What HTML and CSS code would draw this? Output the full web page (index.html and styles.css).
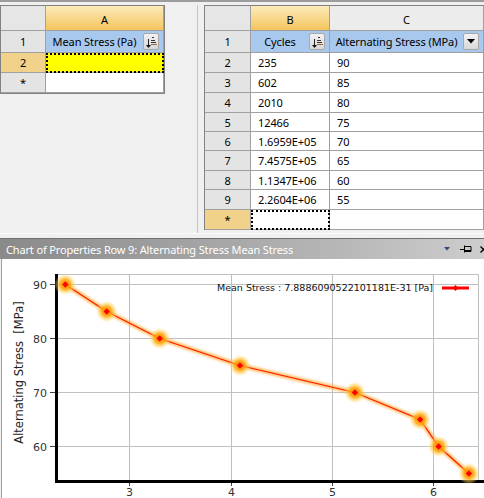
FILE: index.html
```html
<!DOCTYPE html>
<html>
<head>
<meta charset="utf-8">
<title>Chart of Properties</title>
<link rel="stylesheet" href="styles.css">
</head>
<body>
<div class="top">
  <div class="pane-left">
    <div class="grid grid-a">
      <div class="c corner"></div>
      <div class="c ch sel">A</div>
      <div class="c rh">1</div>
      <div class="c hdr"><span class="lbl">Mean Stress (Pa)</span><span class="btn"><svg width="12" height="14" viewBox="0 0 12 14"><path d="M7 2.5h2M6 5.5h4M6 7.5h5M6 9.5h6" stroke="#333" stroke-width="1" fill="none"/><path d="M6 9.5h6" stroke="#9a6a30" stroke-width="1"/><path d="M3.5 4v6" stroke="#222" stroke-width="1"/><path d="M1 10h5l-2.5 3z" fill="#111"/></svg></span></div>
      <div class="c rh sel">2</div>
      <div class="c cur yellow"></div>
      <div class="c rh">*</div>
      <div class="c"></div>
    </div>
  </div>
  <div class="pane-right">
    <div class="grid grid-bc">
      <div class="c corner"></div>
      <div class="c ch sel">B</div>
      <div class="c ch">C</div>

      <div class="c rh">1</div>
      <div class="c hdr"><span class="lbl">Cycles</span><span class="btn"><svg width="12" height="14" viewBox="0 0 12 14"><path d="M7 2.5h2M6 5.5h4M6 7.5h5M6 9.5h6" stroke="#333" stroke-width="1" fill="none"/><path d="M6 9.5h6" stroke="#9a6a30" stroke-width="1"/><path d="M3.5 4v6" stroke="#222" stroke-width="1"/><path d="M1 10h5l-2.5 3z" fill="#111"/></svg></span></div>
      <div class="c hdr"><span class="lbl">Alternating Stress (MPa)</span><span class="btn"><svg width="8" height="5" viewBox="0 0 8 5"><path d="M0 0h8l-4 4.5z" fill="#000"/></svg></span></div>

      <div class="c rh">2</div><div class="c">235</div><div class="c">90</div>
      <div class="c rh">3</div><div class="c">602</div><div class="c">85</div>
      <div class="c rh">4</div><div class="c">2010</div><div class="c">80</div>
      <div class="c rh">5</div><div class="c">12466</div><div class="c">75</div>
      <div class="c rh">6</div><div class="c">1.6959E+05</div><div class="c">70</div>
      <div class="c rh">7</div><div class="c">7.4575E+05</div><div class="c">65</div>
      <div class="c rh">8</div><div class="c">1.1347E+06</div><div class="c">60</div>
      <div class="c rh">9</div><div class="c">2.2604E+06</div><div class="c">55</div>
      <div class="c rh sel">*</div><div class="c cur"></div><div class="c"></div>
    </div>
  </div>
</div>
<div class="gap"></div>
<div class="titlebar">
  <span class="title">Chart of Properties Row 9: Alternating Stress Mean Stress</span>
  <span class="tool tri"><svg width="6" height="4" viewBox="0 0 6 4"><path d="M0 0h6l-3 3.5z" fill="#2d4a78"/></svg></span>
  <span class="tool pin"><svg width="12" height="8" viewBox="0 0 12 8"><path d="M0 4.5h4M4.5 0.5v7M4.5 1.5h6.5v5h-6.5" stroke="#000" stroke-width="1" fill="none"/><path d="M4.5 5.5h6.5" stroke="#000" stroke-width="1"/></svg></span>
  <span class="tool close"><svg width="7" height="7" viewBox="0 0 7 7"><path d="M0.5 0.5l6 6M6.5 0.5l-6 6" stroke="#000" stroke-width="1.3"/></svg></span>
</div>
<div class="chart">
  <svg class="plot" width="482" height="239" viewBox="2 259 482 239">
    <defs>
      <radialGradient id="glow">
        <stop offset="0" stop-color="#ff8a00" stop-opacity="1"/>
        <stop offset="0.45" stop-color="#ffa200" stop-opacity="0.85"/>
        <stop offset="0.75" stop-color="#ffcf55" stop-opacity="0.45"/>
        <stop offset="1" stop-color="#ffeaa0" stop-opacity="0"/>
      </radialGradient>
      <filter id="soft" x="-20%" y="-20%" width="140%" height="140%"><feGaussianBlur stdDeviation="1.2"/></filter>
    </defs>
    <g stroke="#c0c0c0" stroke-width="1" fill="none">
      <path d="M58 274.5H478.5V480"/>
      <path d="M58 284.5H478M58 338.5H478M58 392.5H478M58 446.5H478"/>
      <path d="M129.5 275V480M231.5 275V480M332.5 275V480M433.5 275V480"/>
    </g>
    <g stroke="#444" stroke-width="1">
      <path d="M50 284.5H55M50 338.5H55M50 392.5H55M50 446.5H55"/>
      <path d="M129.5 483V486M231.5 483V486M332.5 483V486M433.5 483V486"/>
    </g>
    <rect x="55" y="274" width="3" height="209" fill="#000"/>
    <rect x="55" y="480" width="429" height="3" fill="#000"/>
    <g class="tick" text-anchor="end">
      <text x="47" y="288.5">90</text>
      <text x="47" y="342.5">80</text>
      <text x="47" y="396.5">70</text>
      <text x="47" y="450.5">60</text>
    </g>
    <g class="tick" text-anchor="middle">
      <text x="129.5" y="496">3</text>
      <text x="231.5" y="496">4</text>
      <text x="332.5" y="496">5</text>
      <text x="433.5" y="496">6</text>
    </g>
    <text class="ytitle" transform="translate(23 372.5) rotate(-90)" text-anchor="middle" xml:space="preserve">Alternating Stress  [MPa]</text>
    <polyline points="65.3,284.5 106.7,311.5 159.7,338.5 240,365.5 354.9,392.5 420.1,419.5 438.6,446.5 468.9,473.5" fill="none" stroke="#ffa830" stroke-width="4.5" stroke-opacity="0.7" filter="url(#soft)"/>
    <polyline points="65.3,284.5 106.7,311.5 159.7,338.5 240,365.5 354.9,392.5 420.1,419.5 438.6,446.5 468.9,473.5" fill="none" stroke="#ff1a00" stroke-width="1.2"/>
    <g fill="url(#glow)">
      <circle cx="65.3" cy="284.5" r="11"/>
      <circle cx="106.7" cy="311.5" r="11"/>
      <circle cx="159.7" cy="338.5" r="11"/>
      <circle cx="240" cy="365.5" r="11"/>
      <circle cx="354.9" cy="392.5" r="11"/>
      <circle cx="420.1" cy="419.5" r="11"/>
      <circle cx="438.6" cy="446.5" r="11"/>
      <circle cx="468.9" cy="473.5" r="11"/>
    </g>
    <g fill="#ff0000">
      <path d="M65.3 281.3l3.2 3.2-3.2 3.2-3.2-3.2z"/>
      <path d="M106.7 308.3l3.2 3.2-3.2 3.2-3.2-3.2z"/>
      <path d="M159.7 335.3l3.2 3.2-3.2 3.2-3.2-3.2z"/>
      <path d="M240 362.3l3.2 3.2-3.2 3.2-3.2-3.2z"/>
      <path d="M354.9 389.3l3.2 3.2-3.2 3.2-3.2-3.2z"/>
      <path d="M420.1 416.3l3.2 3.2-3.2 3.2-3.2-3.2z"/>
      <path d="M438.6 443.3l3.2 3.2-3.2 3.2-3.2-3.2z"/>
      <path d="M468.9 470.3l3.2 3.2-3.2 3.2-3.2-3.2z"/>
    </g>
    <text class="legend" x="217" y="291" textLength="216" lengthAdjust="spacingAndGlyphs">Mean Stress : 7.8886090522101181E-31 [Pa]</text>
    <rect x="442" y="286.5" width="27" height="3" fill="#ff0000"/>
    <path d="M455.5 285l3 3-3 3-3-3z" fill="#ff0000"/>
  </svg>
</div>
</body>
</html>
```
FILE: styles.css
```css
* {
  box-sizing: border-box;
  margin: 0;
  padding: 0;
}

html, body {
  width: 484px;
  height: 498px;
  overflow: hidden;
}

body {
  background: #f0f0f0;
  font-family: "Noto Sans", "Open Sans", sans-serif;
  font-size: 11px;
  color: #000;
}

.top {
  display: flex;
  height: 233px;
  border-top: 2px solid #9c9c9c;
  padding-top: 3px;
}

.pane-left {
  flex: none;
  width: 198px;
  border-right: 1px solid #c6c6c6;
}

.pane-right {
  flex: 1;
  min-width: 0;
  padding-left: 6px;
  overflow: hidden;
}

.grid {
  display: grid;
  width: max-content;
  border-left: 1px solid #828282;
  border-top: 1px solid #828282;
}

.grid-a {
  grid-template-columns: 45px 118px;
  grid-template-rows: 25px 22px 20px 20px;
  border-right: 1px solid #828282;
  border-bottom: 1px solid #828282;
}

.grid-bc {
  grid-template-columns: 46px 79px 154px;
  grid-template-rows: 25px 22px 20px 20px 20px 19px 19px 20px 19px 20px 20px;
}

.c {
  display: flex;
  align-items: center;
  padding-left: 7px;
  background: #fff;
  border-right: 1px solid #a0a0a0;
  border-bottom: 1px solid #a0a0a0;
  white-space: nowrap;
  overflow: hidden;
  letter-spacing: -0.1px;
}

.corner {
  background: #e6e6e6;
}

.rh {
  justify-content: center;
  padding: 0;
  background: #e4e4e4;
}

.rh.sel {
  background: #f1d28b;
}

.ch {
  justify-content: center;
  padding: 2px 0 0;
  background: #ececec;
}

.ch.sel {
  background: linear-gradient(#fcebbb, #f5c55c);
}

.hdr {
  padding: 0;
  background: #a9c8ee;
}

.lbl {
  flex: 1;
  text-align: center;
}

.btn {
  flex: none;
  display: flex;
  align-items: center;
  justify-content: center;
  width: 16px;
  height: 17px;
  margin-right: 4px;
  border: 1px solid #a8a8a8;
  border-radius: 2px;
  background: linear-gradient(#f2f2f2, #d8d8d8);
}

.yellow {
  background: #ffff00;
}

.cur {
  outline: 2px dotted #000;
  outline-offset: -2px;
}

.gap {
  height: 5px;
  border-top: 1px solid #fbfbfb;
}

.titlebar {
  display: flex;
  align-items: center;
  height: 21px;
  padding-left: 6px;
  overflow: hidden;
  border-top: 1px solid #707070;
  background: linear-gradient(to right, #8a8a8a, #a9a9a9 50%, #c4c4c4 88%, #cdcdcd);
  color: #fff;
  font-size: 11px;
  letter-spacing: -0.15px;
  white-space: nowrap;
}

.title {
  flex: 1;
}

.tool {
  flex: none;
  display: flex;
  align-items: center;
}

.tri {
  margin-right: 10px;
}

.pin {
  margin-right: 8px;
}

.close {
  margin-right: -3px;
}

.chart {
  height: 239px;
  margin-left: 1px;
  border-left: 1px solid #a0a0a0;
  background: #fff;
}

.plot {
  display: block;
}

.tick {
  font-family: "DejaVu Sans", sans-serif;
  font-size: 11px;
  fill: #333;
}

.ytitle {
  font-family: "DejaVu Sans", sans-serif;
  font-size: 11.5px;
  fill: #222;
}

.legend {
  font-family: "DejaVu Sans", sans-serif;
  font-size: 9px;
  fill: #111;
}
```
